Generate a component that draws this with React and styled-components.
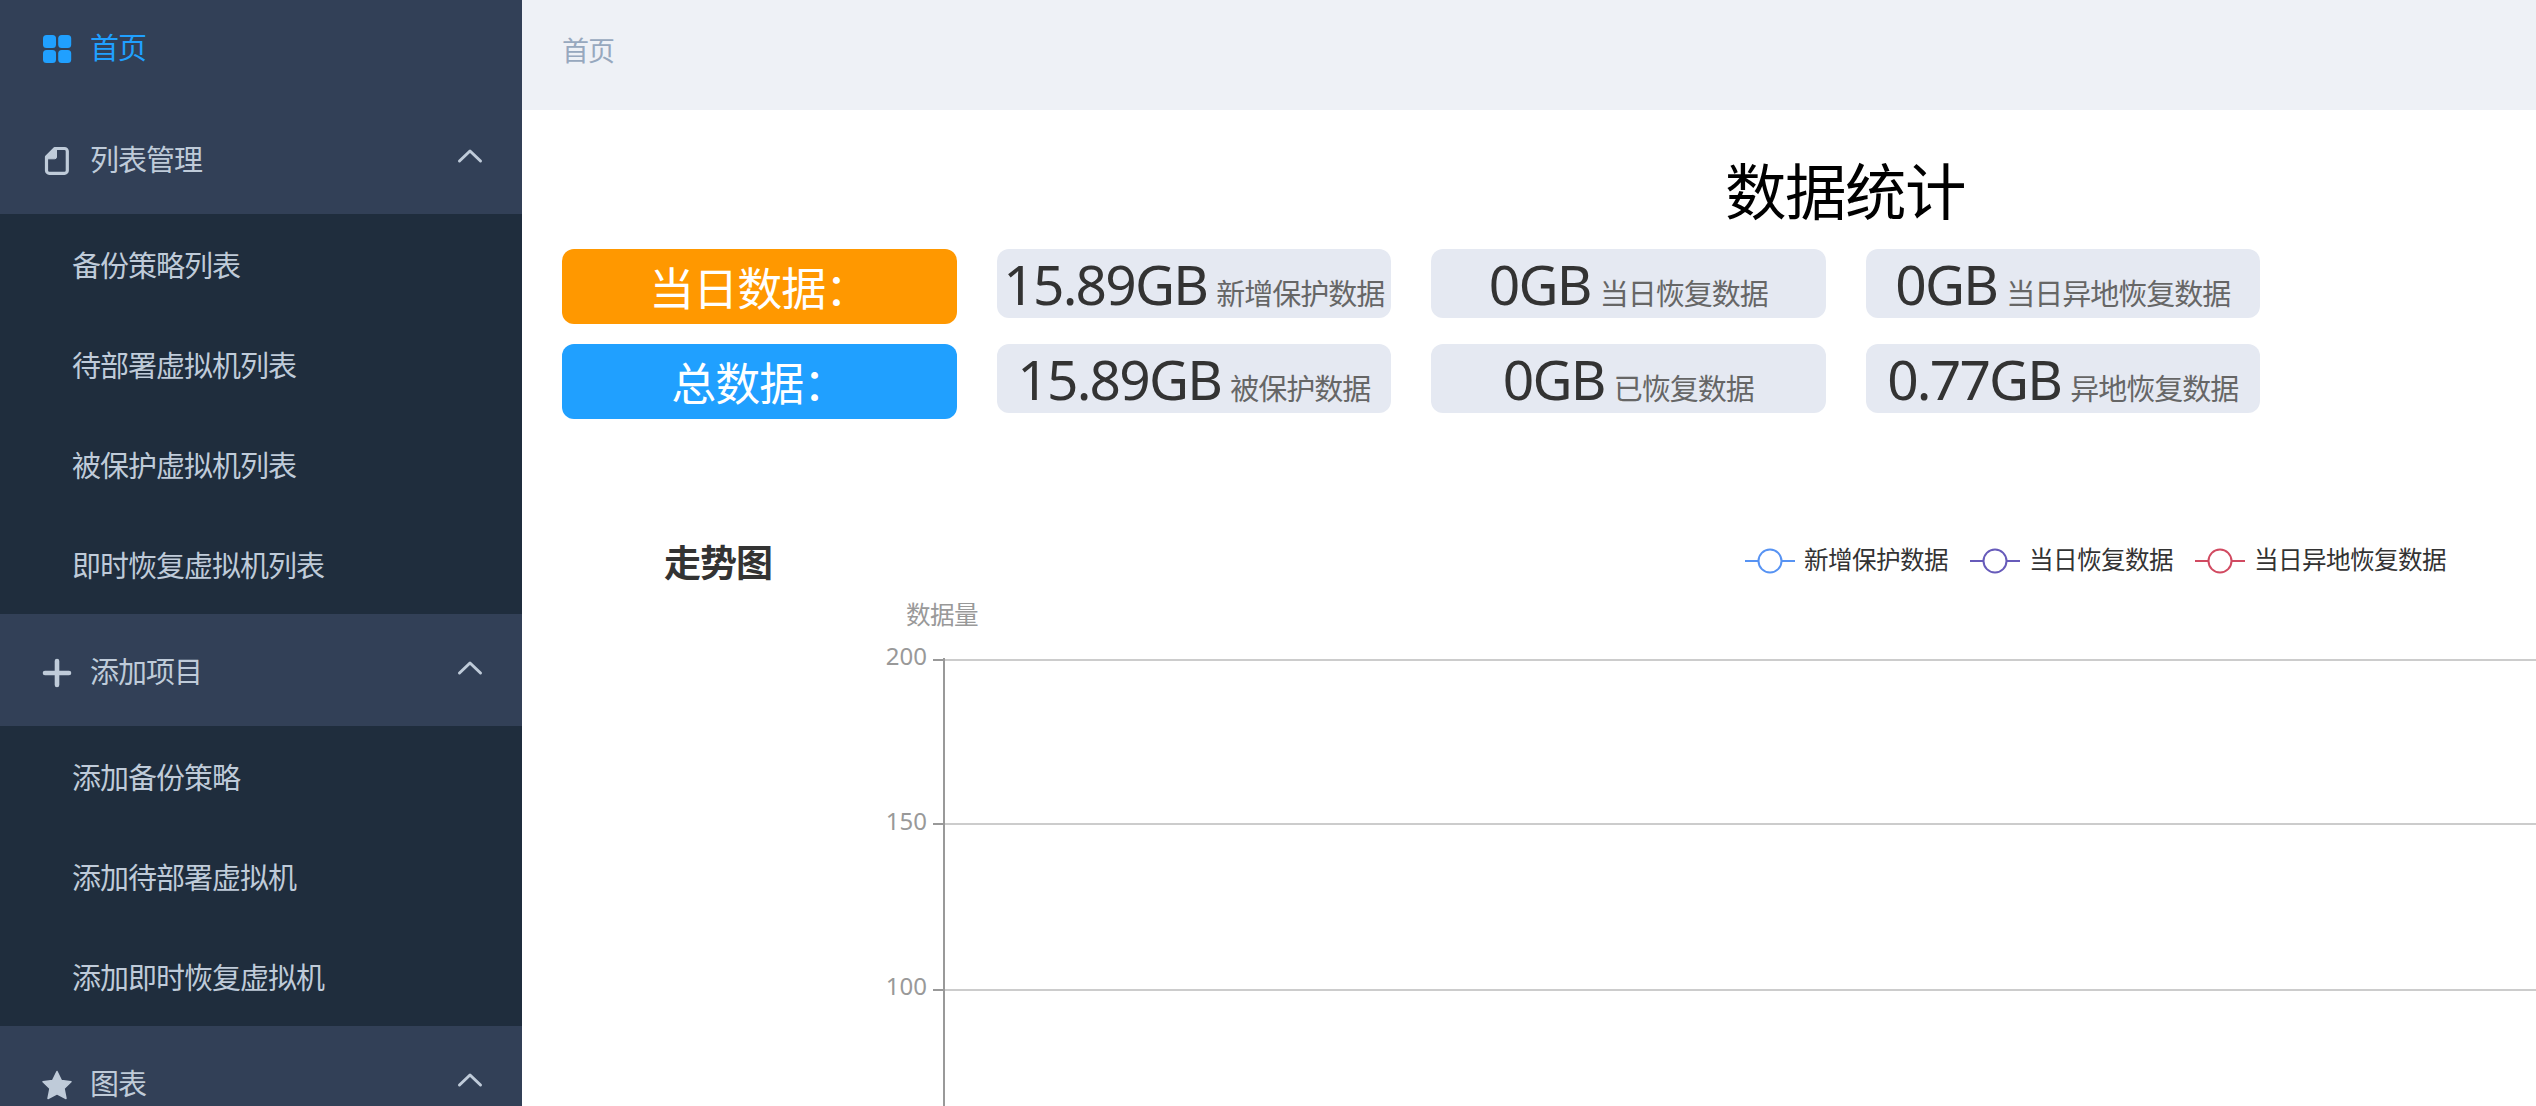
import React from 'react';
import styled, { createGlobalStyle } from 'styled-components';

const Global = createGlobalStyle`
  * { box-sizing: border-box; }
  html, body { margin: 0; padding: 0; background: #fff; overflow: hidden; }
  body { font-family: "Noto Sans", "Noto Sans CJK SC", sans-serif; }
`;

const Page = styled.div`
  display: flex;
  width: 100%;
  height: 1106px;
  overflow: hidden;
  background: #fff;
`;

const Sidebar = styled.nav`
  flex: 0 0 522px;
  height: 1106px;
  overflow: hidden;
  background: #324057;
  font-family: "Noto Sans CJK SC", sans-serif;
  font-size: 29px;
  letter-spacing: -1px;
  color: #bfcbd9;
`;

const MenuRow = styled.div`
  display: flex;
  align-items: center;
  height: ${(p) => (p.$first ? 102 : 112)}px;
  padding: ${(p) => (p.$first ? '0 39px 10px' : '0 39px 0')};
  color: ${(p) => (p.$active ? '#20a0ff' : 'inherit')};
`;

const IconBox = styled.span`
  display: flex;
  width: 36px;
  height: 36px;
  margin: 5px 15px 0 0;
`;

const RowLabel = styled.span`
  flex: 1;
  line-height: 40px;
`;

const Chevron = styled.svg`
  width: 26px;
  height: 16px;
  margin-bottom: 4px;
`;

const SubMenu = styled.div`
  background: #1f2d3d;
`;

const SubItem = styled.div`
  height: 100px;
  padding-left: 72px;
  line-height: 100px;
`;

const Main = styled.main`
  flex: 1;
  min-width: 0;
  height: 1106px;
  overflow: hidden;
`;

const Crumb = styled.header`
  height: 110px;
  padding: 30px 40px 0;
  background: #eef1f6;
  color: #97a8be;
  font: 27px/40px "Noto Sans CJK SC", sans-serif;
  letter-spacing: -1px;
`;

const Title = styled.h1`
  margin: 0;
  padding: 39px 40px 0 672px;
  height: 139px;
  text-align: center;
  font: 400 61.5px/80px "Noto Sans CJK SC", sans-serif;
  letter-spacing: -1.5px;
  color: #000;
`;

const StatGrid = styled.section`
  display: grid;
  grid-template-columns: repeat(4, 394.5px);
  column-gap: 40px;
  row-gap: 20px;
  align-items: start;
  padding-left: 40px;
`;

const StatLabel = styled.div`
  height: 75px;
  border-radius: 12px;
  background: ${(p) => p.$color};
  color: #fff;
  text-align: center;
  font: 45px/76px "Noto Sans CJK SC", sans-serif;
  letter-spacing: -1px;
`;

const StatCard = styled.div`
  display: flex;
  justify-content: center;
  align-items: baseline;
  gap: 9px;
  height: 69px;
  border-radius: 12px;
  background: #e5e9f2;
  white-space: nowrap;
`;

const Value = styled.span`
  font: 55px/70px "Noto Sans", sans-serif;
  letter-spacing: -1.8px;
  color: #333;
`;

const Caption = styled.span`
  font: 29px/40px "Noto Sans CJK SC", sans-serif;
  letter-spacing: -1px;
  color: #666;
`;

const ChartHead = styled.div`
  display: flex;
  justify-content: space-between;
  height: 60px;
  margin: 121px 89px 0 142px;
`;

const ChartTitle = styled.h2`
  margin: -3px 0 0;
  font: 700 37px/48px "Noto Sans CJK SC", sans-serif;
  letter-spacing: -1px;
  color: #333;
`;

const Legend = styled.div`
  display: flex;
  gap: 21px;
`;

const LegendItem = styled.div`
  display: flex;
  gap: 10px;
  color: #333;
`;

const LegendName = styled.span`
  margin: -1px 0 0 -1px;
  padding-right: 1px;
  font: 24.6px/38px "Noto Sans CJK SC", sans-serif;
  letter-spacing: -0.6px;
`;

const LegendMark = styled.svg`
  width: 50px;
  height: 28px;
  margin-top: 7px;
`;

const AxisName = styled.div`
  height: 39px;
  padding-left: 384px;
  font: 24.6px/27px "Noto Sans CJK SC", sans-serif;
  letter-spacing: -0.6px;
  color: #999;
`;

const ChartBody = styled.div`
  display: flex;
`;

const Scale = styled.div`
  width: 405px;
  text-align: right;
  color: #999;
  font: 24px/33px "Noto Sans", sans-serif;
`;

const Tick = styled.div`
  height: 165px;
`;

const Plot = styled.svg`
  width: 1603px;
  height: 467px;
  margin-left: 6px;
`;

const icons = {
  menu: (
    <g fill="currentColor">
      <rect x="4" y="4" width="13" height="13" rx="3.500" />
      <rect x="19.200" y="4" width="13" height="13" rx="3.500" />
      <rect x="4" y="19" width="13" height="13" rx="3.500" />
      <rect x="19.200" y="19" width="13" height="13" rx="3.500" />
    </g>
  ),
  doc: (
    <g>
      <path d="M16 5.500H25.500a2.800 2.800 0 0 1 2.800 2.800v19.200a2.800 2.800 0 0 1-2.800 2.800H10.300a2.800 2.800 0 0 1-2.800-2.800V14z" fill="none" stroke="currentColor" strokeWidth="3.200" strokeLinejoin="round" />
      <path d="M17.500 5V14a1.800 1.800 0 0 1-1.800 1.800H7V13.500L15 5z" fill="currentColor" stroke="currentColor" />
    </g>
  ),
  plus: <path d="M18 6V30M6 18H30" stroke="currentColor" strokeWidth="4.600" strokeLinecap="round" />,
  star: <path d="M18 4.500L22.400 13.500L32 14.700L25 21.500L27 31.500L18 26.800L9 31.500L11 21.500L4 14.700L13.600 13.500Z" fill="currentColor" stroke="currentColor" strokeWidth="1.500" strokeLinejoin="round" />,
};

const menus = [
  { icon: 'doc', label: '列表管理', items: ['备份策略列表', '待部署虚拟机列表', '被保护虚拟机列表', '即时恢复虚拟机列表'] },
  { icon: 'plus', label: '添加项目', items: ['添加备份策略', '添加待部署虚拟机', '添加即时恢复虚拟机'] },
  { icon: 'star', label: '图表', items: [] },
];

const stats = [
  { label: '当日数据：', color: '#ff9800', cards: [['15.89GB', '新增保护数据'], ['0GB', '当日恢复数据'], ['0GB', '当日异地恢复数据']] },
  { label: '总数据：', color: '#20a0ff', cards: [['15.89GB', '被保护数据'], ['0GB', '已恢复数据'], ['0.77GB', '异地恢复数据']] },
];

const series = [
  ['新增保护数据', '#5793f3'],
  ['当日恢复数据', '#675bba'],
  ['当日异地恢复数据', '#d14a61'],
];

function MenuIcon({ name }) {
  return (
    <IconBox>
      <svg width="36" height="36" viewBox="0 0 36 36">{icons[name]}</svg>
    </IconBox>
  );
}

export default function App() {
  return (
    <Page>
      <Global />
      <Sidebar>
        <MenuRow $first $active>
          <MenuIcon name="menu" />
          <RowLabel>首页</RowLabel>
        </MenuRow>
        {menus.map((m) => (
          <React.Fragment key={m.label}>
            <MenuRow>
              <MenuIcon name={m.icon} />
              <RowLabel>{m.label}</RowLabel>
              <Chevron viewBox="0 0 26 16">
                <path d="M2.500 13L13 3L23.500 13" fill="none" stroke="currentColor" strokeWidth="3" strokeLinecap="round" strokeLinejoin="round" />
              </Chevron>
            </MenuRow>
            <SubMenu>
              {m.items.map((t) => <SubItem key={t}>{t}</SubItem>)}
            </SubMenu>
          </React.Fragment>
        ))}
      </Sidebar>
      <Main>
        <Crumb>首页</Crumb>
        <Title>数据统计</Title>
        <StatGrid>
          {stats.map((row) => (
            <React.Fragment key={row.label}>
              <StatLabel $color={row.color}>{row.label}</StatLabel>
              {row.cards.map(([value, caption]) => (
                <StatCard key={caption}>
                  <Value>{value}</Value>
                  <Caption>{caption}</Caption>
                </StatCard>
              ))}
            </React.Fragment>
          ))}
        </StatGrid>
        <ChartHead>
          <ChartTitle>走势图</ChartTitle>
          <Legend>
            {series.map(([name, color]) => (
              <LegendItem key={name}>
                <LegendMark viewBox="0 0 50 28">
                  <path d="M0 14H50" stroke={color} strokeWidth="2" />
                  <circle cx="25" cy="14" r="11.500" fill="#fff" stroke={color} strokeWidth="2" />
                </LegendMark>
                <LegendName>{name}</LegendName>
              </LegendItem>
            ))}
          </Legend>
        </ChartHead>
        <AxisName>数据量</AxisName>
        <ChartBody>
          <Scale>
            {[200, 150, 100].map((n) => <Tick key={n}>{n}</Tick>)}
          </Scale>
          <Plot viewBox="0 0 1603 467">
            {[21, 185, 351].map((y) => (
              <g key={y}>
                <path d={`M12 ${y}H1603`} stroke="#ccc" strokeWidth="2" />
                <path d={`M0 ${y}H11`} stroke="#999" strokeWidth="2" />
              </g>
            ))}
            <path d="M11 19V467" stroke="#999" strokeWidth="2" />
          </Plot>
        </ChartBody>
      </Main>
    </Page>
  );
}
